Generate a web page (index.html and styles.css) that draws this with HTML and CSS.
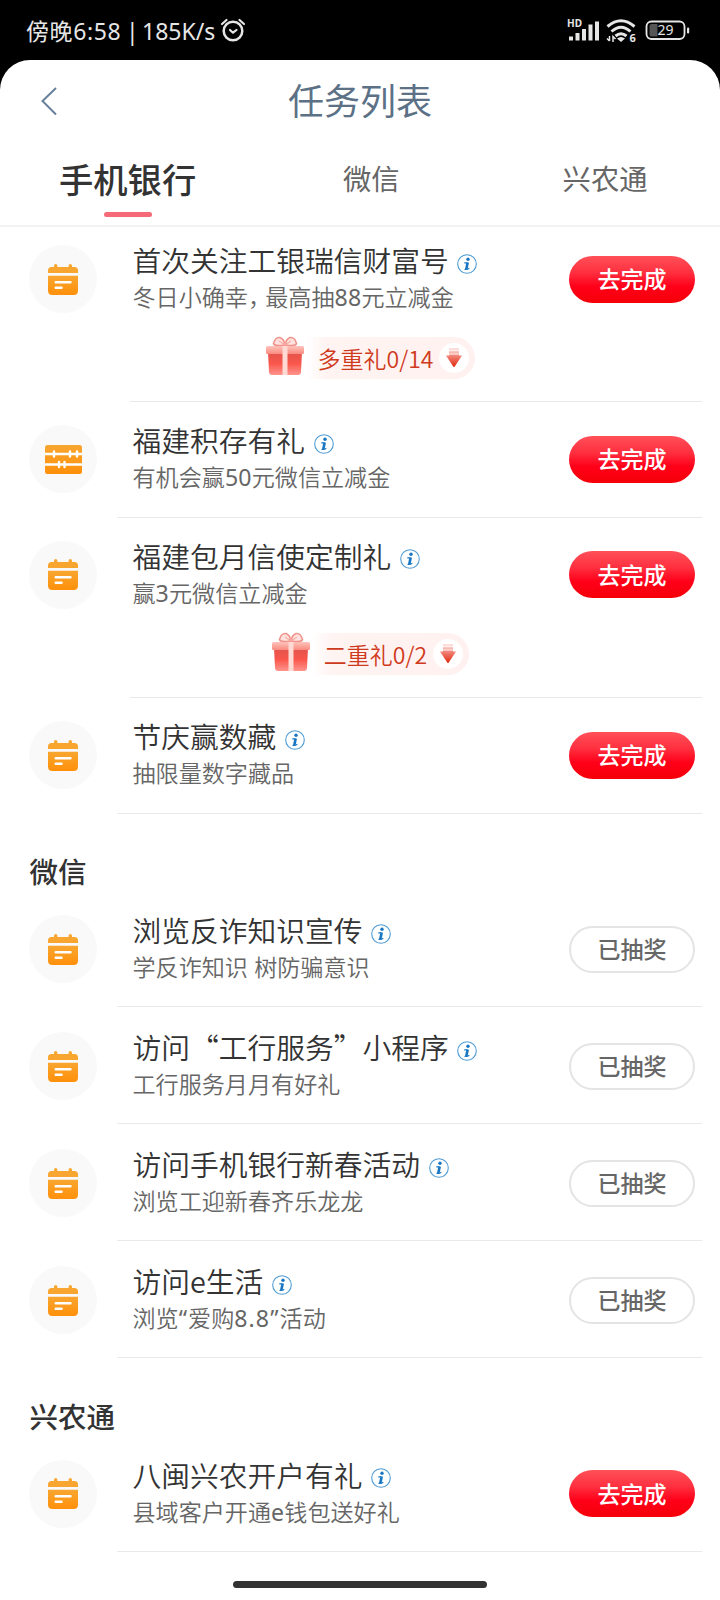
FILE: index.html
```html
<!DOCTYPE html>
<html lang="zh-CN">
<head>
<meta charset="utf-8">
<title>任务列表</title>
<link rel="stylesheet" href="styles.css">
</head>
<body>
<svg class="defs" aria-hidden="true">
  <defs>
    <linearGradient id="orange" x1="0" y1="0" x2="0" y2="1"><stop offset="0" stop-color="#f8a630"/><stop offset="1" stop-color="#ff900a"/></linearGradient>
    <linearGradient id="box" x1="0" y1="0" x2="0" y2="1"><stop offset="0" stop-color="#e2544b"/><stop offset=".5" stop-color="#f9564c"/><stop offset="1" stop-color="#ff958d"/></linearGradient>
    <linearGradient id="lid" x1="0" y1="0" x2="0" y2="1"><stop offset="0" stop-color="#ffc4bc"/><stop offset="1" stop-color="#fb8a7f"/></linearGradient>
    <linearGradient id="arrow" x1="0" y1="0" x2="0" y2="1"><stop offset="0" stop-color="#f58f84"/><stop offset="1" stop-color="#e02a10"/></linearGradient>
    <symbol id="calendar" viewBox="0 0 30 31">
      <path fill="#f8a630" d="M0 9V6.500Q0 3 3.500 3H6V1.700a1.700 1.700 0 0 1 3.400 0V3H20.600V1.700a1.700 1.700 0 0 1 3.400 0V3h2.500Q30 3 30 6.500V9z"/>
      <path fill="url(#orange)" d="M0 11.700H30V26.500Q30 31 25.500 31H4.500Q0 31 0 26.500z"/>
      <path stroke="#fff" stroke-width="2.600" stroke-linecap="round" d="M7.800 18.200H22.400M7.800 23.700H13.500"/>
    </symbol>
    <symbol id="abacus" viewBox="0 0 37 29">
      <rect width="37" height="29" rx="2.500" fill="url(#orange)"/>
      <path stroke="#fff" stroke-width="2.300" fill="none" d="M0 9H37M0 19.500H37"/>
      <path stroke="#fff" stroke-width="2.400" stroke-linecap="round" d="M9 6.500v5M25 6.500v5M32 6.500v5M14 17v5M19.500 17v5"/>
    </symbol>
    <symbol id="info" viewBox="0 0 20 20">
      <circle cx="10" cy="10" r="9.300" fill="#fff" stroke="#4f9cd4" stroke-width="1.100"/>
      <circle cx="11" cy="5.300" r="1.700" fill="#1976c2"/>
      <path fill="none" stroke="#1976c2" stroke-width="1.100" d="M7.300 8.900H10.500M7.500 15.300Q10 16 12.300 14.200"/>
      <path stroke="#1976c2" stroke-width="2.600" d="M10.700 8.400L9.200 15.500"/>
    </symbol>
    <symbol id="gift" viewBox="0 0 40 40">
      <path d="M3 16H37L36 36Q35.800 39 33 39H7Q4.200 39 4 36z" fill="url(#box)"/>
      <rect x="1" y="10" width="38" height="8" rx="1.500" fill="url(#lid)"/>
      <rect x="17.500" y="10" width="5" height="29" fill="#ffd9d3"/>
      <path fill="#ffe2de" stroke="#f0938b" stroke-width="1.600" d="M20 9Q9 10.500 8.500 7.500Q10 1 15 1.500Q19 3 20 9Q21 3 25 1.500Q30 1 31.500 7.500Q31 10.500 20 9z"/>
      <path fill="none" stroke="#f7b0a9" stroke-width="1.200" d="M20 9L14 5M20 9L26 5"/>
      <circle cx="20" cy="8" r="2" fill="#f9a39b"/>
    </symbol>
    <symbol id="down" viewBox="0 0 16 20">
      <rect x="3" y="0" width="10" height="2.500" fill="#fbdedb"/>
      <rect x="3" y="3.200" width="10" height="2.500" fill="#f8b9b2"/>
      <path fill="url(#arrow)" d="M3 6.400H13V7.500H16L8.800 18.500Q8 19.500 7.200 18.500L0 7.500H3z"/>
    </symbol>
  </defs>
</svg>

<header class="status">
  <span class="status-text"><span class="time">傍晚6:58</span><span class="bar">|</span><span>185K/s</span></span>
  <svg class="alarm" viewBox="0 0 26 24" fill="none" stroke="#e6e6e6">
    <circle cx="13" cy="13" r="9.300" stroke-width="2.500"/>
    <path stroke-width="2.200" stroke-linecap="round" stroke-linejoin="round" d="M2 6L6.500 2M19.500 2L24 6M10 12L13 14.700L16.500 12"/>
  </svg>
  <svg class="system" viewBox="-6 -4 130 34">
    <text x="-1" y="9" class="hd" textLength="15" lengthAdjust="spacingAndGlyphs">HD</text>
    <path stroke="#e6e6e6" stroke-width="4" d="M3 22.500V18.500M9.500 22.500V15M16 22.500V11M22.500 22.500V6.500M29 22.500V3.500"/>
    <g fill="none" stroke="#e6e6e6" stroke-width="3">
      <path d="M39.500 8.500Q53 -3 66.500 8.500M43.500 13.500Q53 5 62.500 13.500M47.500 18Q53 13.500 58.500 18"/>
    </g>
    <path fill="#e6e6e6" d="M49 20.500Q53 17.500 57 20.500L53 24z"/>
    <path fill="none" stroke="#e6e6e6" stroke-width="1.500" d="M41.500 18V23M39 20.500L41.500 23M45 24V18.500L47.500 21"/>
    <text x="61.500" y="23.500" class="six">6</text>
    <rect x="78.500" y="3.500" width="38" height="17.500" rx="5" fill="none" stroke="#e6e6e6" stroke-width="1.800"/>
    <path fill="#555" d="M83.500 6H89.500V18.500H83.500Q81.500 18.500 81.500 16.500V8Q81.500 6 83.500 6z"/>
    <rect x="119" y="9.500" width="2.200" height="6" rx="1" fill="#e6e6e6"/>
    <text x="97.500" y="17.300" class="charge" text-anchor="middle">29</text>
  </svg>
</header>

<main class="page">
  <div class="titlebar">
    <svg class="back" viewBox="0 0 18 30" fill="none" stroke="#66809a" stroke-width="2"><path d="M16 2L2.500 15L16 28.500"/></svg>
    <h1>任务列表</h1>
  </div>
  <nav class="tabs">
    <span class="tab tab-active">手机银行</span>
    <span class="tab tab-mid">微信</span>
    <span class="tab tab-last">兴农通</span>
  </nav>

  <section>
    <article class="task task-first task-gift">
      <div class="row">
        <div class="avatar"><svg class="calendar"><use href="#calendar"/></svg></div>
        <div class="copy"><h2>首次关注工银瑞信财富号<svg class="info"><use href="#info"/></svg></h2><p>冬日小确幸<span class="comma">，</span>最高抽<span class="num">88</span>元立减金</p></div>
        <button class="go">去完成</button>
      </div>
      <div class="bonus"><svg class="gift"><use href="#gift"/></svg><div class="pill"><span>多重礼0/14</span><i><svg class="down"><use href="#down"/></svg></i></div></div>
    </article>
    <article class="task task-bank">
      <div class="row">
        <div class="avatar"><svg class="abacus"><use href="#abacus"/></svg></div>
        <div class="copy"><h2>福建积存有礼<svg class="info"><use href="#info"/></svg></h2><p>有机会赢<span class="num">50</span>元微信立减金</p></div>
        <button class="go">去完成</button>
      </div>
    </article>
    <article class="task task-bank task-gift">
      <div class="row">
        <div class="avatar"><svg class="calendar"><use href="#calendar"/></svg></div>
        <div class="copy"><h2>福建包月信使定制礼<svg class="info"><use href="#info"/></svg></h2><p>赢<span class="num">3</span>元微信立减金</p></div>
        <button class="go">去完成</button>
      </div>
      <div class="bonus"><svg class="gift"><use href="#gift"/></svg><div class="pill"><span>二重礼0/2</span><i><svg class="down"><use href="#down"/></svg></i></div></div>
    </article>
    <article class="task task-bank">
      <div class="row">
        <div class="avatar"><svg class="calendar"><use href="#calendar"/></svg></div>
        <div class="copy"><h2>节庆赢数藏<svg class="info"><use href="#info"/></svg></h2><p>抽限量数字藏品</p></div>
        <button class="go">去完成</button>
      </div>
    </article>
  </section>

  <section>
    <h3>微信</h3>
    <article class="task">
      <div class="row">
        <div class="avatar"><svg class="calendar"><use href="#calendar"/></svg></div>
        <div class="copy"><h2>浏览反诈知识宣传<svg class="info"><use href="#info"/></svg></h2><p>学反诈知识<span class="gap"> </span>树防骗意识</p></div>
        <button class="done">已抽奖</button>
      </div>
    </article>
    <article class="task">
      <div class="row">
        <div class="avatar"><svg class="calendar"><use href="#calendar"/></svg></div>
        <div class="copy"><h2>访问“工行服务”小程序<svg class="info"><use href="#info"/></svg></h2><p>工行服务月月有好礼</p></div>
        <button class="done">已抽奖</button>
      </div>
    </article>
    <article class="task">
      <div class="row">
        <div class="avatar"><svg class="calendar"><use href="#calendar"/></svg></div>
        <div class="copy"><h2>访问手机银行新春活动<svg class="info"><use href="#info"/></svg></h2><p>浏览工迎新春齐乐龙龙</p></div>
        <button class="done">已抽奖</button>
      </div>
    </article>
    <article class="task">
      <div class="row">
        <div class="avatar"><svg class="calendar"><use href="#calendar"/></svg></div>
        <div class="copy"><h2>访问e生活<svg class="info"><use href="#info"/></svg></h2><p>浏览<span class="num wide">“</span>爱购<span class="num wide">8.8”</span>活动</p></div>
        <button class="done">已抽奖</button>
      </div>
    </article>
  </section>

  <section>
    <h3>兴农通</h3>
    <article class="task">
      <div class="row">
        <div class="avatar"><svg class="calendar"><use href="#calendar"/></svg></div>
        <div class="copy"><h2>八闽兴农开户有礼<svg class="info"><use href="#info"/></svg></h2><p>县域客户开通<span class="num">e</span>钱包送好礼</p></div>
        <button class="go">去完成</button>
      </div>
    </article>
  </section>
  <div class="home"></div>
</main>
</body>
</html>
```

FILE: styles.css
```css
* { box-sizing: border-box; }
body {
  margin: 0;
  width: 720px;
  height: 1600px;
  overflow: hidden;
  background: #000;
  color: #333;
  font-family: "Noto Sans CJK SC", sans-serif;
}
h1, h2, h3, p { margin: 0; font-weight: 400; }
svg { display: block; }
.defs { position: absolute; width: 0; height: 0; }

.status {
  height: 60px;
  padding: 2px 28px 0 26px;
  display: flex;
  align-items: center;
}
.status-text {
  width: 194px;
  color: #e6e6e6;
  font: 23px/34px "Noto Sans", "Noto Sans CJK SC", sans-serif;
  white-space: nowrap;
  display: flex;
}
.time { width: 96px; letter-spacing: 0.6px; }
.bar { width: 20px; padding-left: 4px; }
.alarm { width: 26px; height: 24px; margin-top: -2px; }
.system { width: 130px; height: 34px; margin-left: auto; }
.hd { font: 700 10px "Noto Sans", sans-serif; fill: #e6e6e6; }
.six { font: 700 11px "Noto Sans", sans-serif; fill: #e6e6e6; }
.charge { font: 14px "Noto Sans", sans-serif; fill: #e6e6e6; }

.page {
  height: 1540px;
  background: #fff;
  border-radius: 30px 30px 0 0;
}
.titlebar {
  height: 82px;
  padding-left: 40px;
  display: grid;
  grid-template-columns: 18px 1fr 58px;
  align-items: center;
}
.back { width: 18px; height: 30px; }
h1 {
  color: #5c7186;
  font-size: 36px;
  line-height: 46px;
  padding-bottom: 4px;
  text-align: center;
}
.tabs {
  height: 85px;
  border-bottom: 2px solid #f3f3f3;
  display: flex;
}
.tab {
  color: #666;
  font-size: 28.3px;
  line-height: 40px;
  padding-top: 15.5px;
}
.tab-active {
  margin-left: 59px;
  width: 138px;
  padding-top: 10.5px;
  color: #333;
  font-size: 34.3px;
  line-height: 50px;
  font-weight: 500;
}
.tab-active::after {
  content: "";
  display: block;
  width: 48px;
  height: 5px;
  margin: 9.5px 0 0 45px;
  border-radius: 3px;
  background: #f66a78;
}
.tab-mid { margin-left: 146px; }
.tab-last { margin-left: 163px; }

.task { padding-top: 25px; height: 117px; display: flex; flex-direction: column; }
.task::after {
  content: "";
  height: 1px;
  margin: auto 18px 0 117px;
  background: #e9e9e9;
}
.task-bank { height: 115.5px; padding-top: 23px; }
.task-gift { height: 180.5px; }
.task-gift::after { margin-left: 130px; }
.task-first { height: 175px; padding-top: 18px; }
.row {
  height: 68px;
  padding: 0 25px 0 29px;
  display: grid;
  grid-template: 68px / 68px 1fr 126px;
  align-items: center;
}
.avatar {
  width: 68px;
  height: 68px;
  border-radius: 50%;
  background: #f9f9f9;
  display: grid;
  place-items: center;
}
.calendar { width: 30px; height: 31px; }
.abacus { width: 37px; height: 29px; }
.copy { padding: 0 0 4px 35.5px; white-space: nowrap; }
h2 {
  font-size: 28.75px;
  line-height: 38px;
  font-weight: 350;
  display: flex;
  align-items: center;
}
.info { width: 20px; height: 20px; margin: 7px 0 0 8.5px; }
.copy p { color: #666; font-size: 23.1px; line-height: 34px; font-weight: 350; }
.comma { letter-spacing: -5.8px; }
.num { font-family: "Noto Sans", sans-serif; font-weight: 400; line-height: 1; letter-spacing: 0.2px; }
.wide { letter-spacing: 1.1px; }
.gap { letter-spacing: 1px; }
button {
  width: 126px;
  height: 47px;
  padding: 0 0 2px;
  border: 0;
  border-radius: 24px;
  font: 500 23px/34px "Noto Sans CJK SC", sans-serif;
}
.go {
  color: #fff;
  background: linear-gradient(#ff5058, #ff3040 35%, #ff0019 65%, #f50008);
}
.done { color: #666; background: #fff; border: 2px solid #e4e4e4; padding: 0 0 3px; }

.bonus {
  height: 42px;
  margin-top: 24px;
  display: flex;
  justify-content: center;
  padding-left: 20px;
}
.gift { width: 40px; height: 40px; margin: -1px 1px 0 0; }
.pill {
  height: 42px;
  padding: 0 6px 0 12px;
  border-radius: 0 21px 21px 0;
  background: linear-gradient(90deg, #fff, #fff4f2 20px, #fff1f0);
  color: #cf3a1c;
  font-size: 23px;
  font-weight: 350;
  display: flex;
  align-items: center;
}
.pill i {
  width: 30px;
  height: 30px;
  margin-left: 6px;
  border-radius: 50%;
  background: #fff;
  display: grid;
  place-items: center;
}
.down { width: 16px; height: 20px; }

h3 {
  height: 76.5px;
  padding: 37.5px 0 0 29.5px;
  font-size: 28.5px;
  line-height: 40px;
  font-weight: 500;
}
.home {
  width: 254px;
  height: 7px;
  margin: 29.5px auto 0;
  border-radius: 4px;
  background: #333;
}
```
